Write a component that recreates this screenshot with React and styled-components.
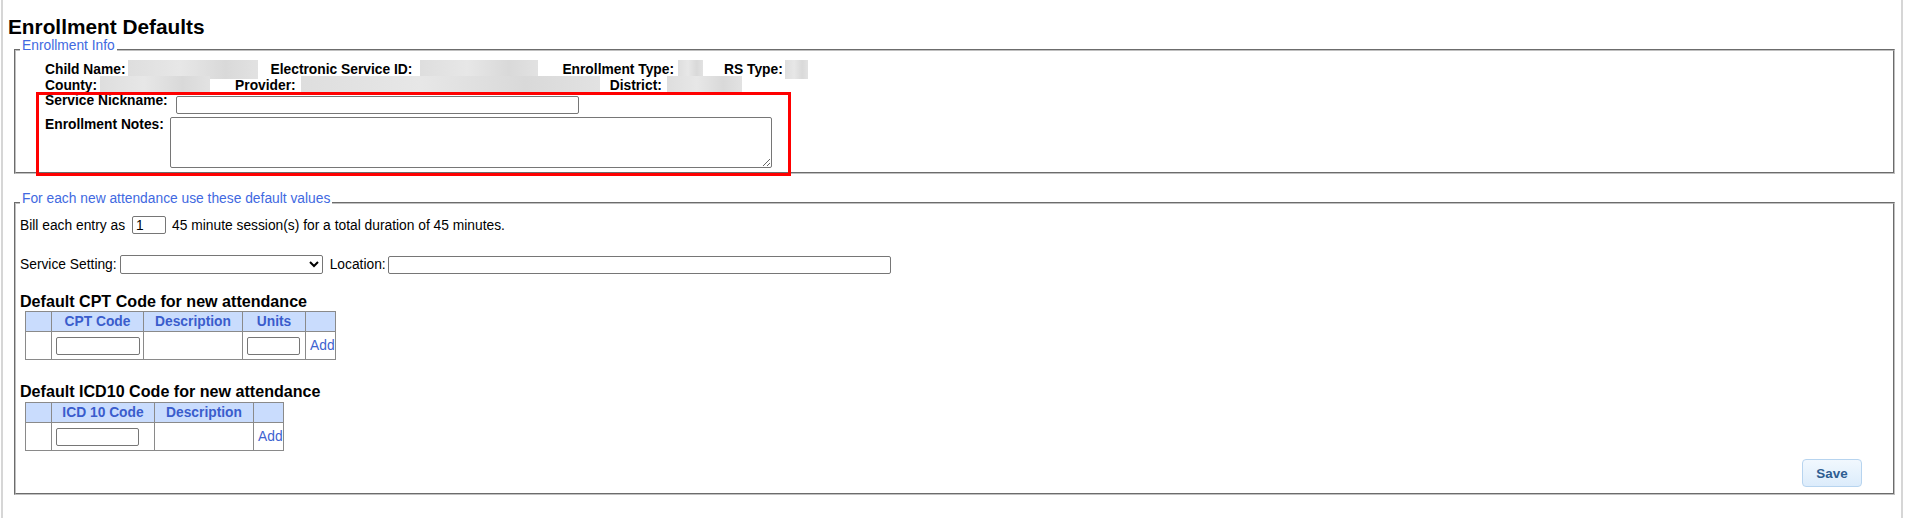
import React from "react";
import styled, { createGlobalStyle } from "styled-components";

const GlobalStyle = createGlobalStyle`
  body {
    margin: 0;
    background: #fff;
    font-family: "Liberation Sans", Arial, sans-serif;
    font-size: 13.8px;
    color: #000;
  }
`;

const Frame = styled.div`
  box-sizing: border-box;
  width: 1902px;
  min-height: 518px;
  margin-left: 1px;
  padding: 15px 6px 0 5px;
  border-left: 2px solid #d6d6d6;
  border-right: 2px solid #d6d6d6;
`;

const Title = styled.h1`
  margin: 0;
  font-size: 20.8px;
  font-weight: bold;
  line-height: 23px;
`;

const Fieldset = styled.fieldset`
  margin: ${(p) => p.$mt || 0}px 0 0 6px;
  padding: 0 4px ${(p) => p.$pb}px 4px;
  border: 2px groove #c0c0c0;
  min-width: 0;
`;

const Legend = styled.legend`
  padding: 0 2px 8px;
  color: #4169e1;
  font-size: 13.8px;
  line-height: normal;
`;

const InfoBlock = styled.div`
  padding-left: 25px;
`;

const InfoRow = styled.div`
  display: flex;
  align-items: center;
  height: 16.2px;
`;

const InfoItem = styled.div`
  display: flex;
  align-items: center;
  margin-left: ${(p) => p.$gap}px;
`;

const InfoLabel = styled.span`
  font-weight: bold;
  white-space: nowrap;
`;

const Redacted = styled.span`
  display: block;
  width: ${(p) => p.$w}px;
  height: 19px;
  margin-left: ${(p) => p.$lead}px;
  background: linear-gradient(90deg, #dedede 0%, #e7e7e7 40%, #d9d9d9 75%, #e2e2e2 100%);
  filter: blur(0.6px);
`;

const Highlight = styled.div`
  position: relative;
`;

const HighlightBox = styled.div`
  position: absolute;
  top: -1px;
  left: 16px;
  width: 755px;
  height: 84px;
  box-sizing: border-box;
  border: 3px solid #f00;
  pointer-events: none;
`;

const FieldRow = styled.div`
  display: flex;
  align-items: flex-start;
  gap: ${(p) => p.$gap}px;
  padding-left: 25px;
`;

const FieldLabel = styled.label`
  font-weight: bold;
  line-height: 15.8px;
  white-space: nowrap;
`;

const TextInput = styled.input`
  box-sizing: border-box;
  width: ${(p) => p.$w}px;
  height: 18px;
  margin: ${(p) => (p.$spaced ? "3px 0" : "0")};
  padding: 1px 3px;
  border: 1px solid #767676;
  border-radius: 2px;
  font: 13.8px "Liberation Sans", Arial, sans-serif;
  background: #fff;
`;

const NotesArea = styled.textarea`
  box-sizing: border-box;
  width: 602px;
  height: 51px;
  margin: 0;
  padding: 2px;
  border: 1px solid #767676;
  border-radius: 2px;
  font: 13.8px "Liberation Sans", Arial, sans-serif;
`;

const LineRow = styled.div`
  display: flex;
  align-items: center;
  height: ${(p) => p.$h}px;
  margin-top: ${(p) => p.$mt}px;
  white-space: nowrap;
`;

const Gap = styled.span`
  display: inline-block;
  width: ${(p) => p.$w}px;
`;

const Select = styled.select`
  box-sizing: border-box;
  width: 203px;
  height: 19px;
  margin: 0;
  padding: 0 2px;
  border: 1px solid #767676;
  border-radius: 2px;
  background: #fff;
  font: 13.8px "Liberation Sans", Arial, sans-serif;
`;

const SectionHeading = styled.div`
  margin-top: ${(p) => p.$mt}px;
  font-size: 16.1px;
  font-weight: bold;
  line-height: normal;
`;

const CodeTable = styled.table`
  border-collapse: collapse;
  table-layout: fixed;
  width: ${(p) => p.$w}px;
  margin: ${(p) => p.$mt || 0}px 0 0 5px;
`;

const Col = styled.col`
  width: ${(p) => p.$w}px;
`;

const HeadCell = styled.th`
  height: 19px;
  padding: 0;
  border: 1px solid #8a8a8a;
  background: #c9dcfd;
  color: #3a5ccc;
  font-size: 13.8px;
  font-weight: bold;
  text-align: center;
`;

const BodyCell = styled.td`
  height: 27px;
  padding: 0 4px;
  border: 1px solid #8a8a8a;
  text-align: ${(p) => (p.$center ? "center" : "left")};
`;

const CellInput = styled(TextInput)`
  display: block;
`;

const AddLink = styled.a`
  color: #3f63d0;
  text-decoration: none;
  cursor: pointer;
`;

const SaveRow = styled.div`
  display: flex;
  justify-content: flex-end;
  margin-top: 8px;
  padding-right: 27px;
`;

const SaveButton = styled.button`
  width: 60px;
  height: 28px;
  padding: 0;
  border: 1px solid #b7d4ef;
  border-radius: 4px;
  background: linear-gradient(#f1f8fe, #dcecfb);
  color: #2e5d91;
  font: bold 13.4px "Liberation Sans", Arial, sans-serif;
  cursor: pointer;
`;

const infoRows = [
  [
    { label: "Child Name:", w: 130, lead: 2, gap: 0 },
    { label: "Electronic Service ID:", w: 118, lead: 8, gap: 13 },
    { label: "Enrollment Type:", w: 25, lead: 4, gap: 24 },
    { label: "RS Type:", w: 23, lead: 2, gap: 21 },
  ],
  [
    { label: "County:", w: 110, lead: 3, gap: 0 },
    { label: "Provider:", w: 299, lead: 5, gap: 25 },
    { label: "District:", w: 75, lead: 5, gap: 10 },
  ],
];

export default function App() {
  return (
    <Frame>
      <GlobalStyle />
      <Title>Enrollment Defaults</Title>

      <Fieldset $pb={4}>
        <Legend>Enrollment Info</Legend>
        <InfoBlock>
          {infoRows.map((row, i) => (
            <InfoRow key={i}>
              {row.map((item) => (
                <InfoItem key={item.label} $gap={item.gap}>
                  <InfoLabel>{item.label}</InfoLabel>
                  <Redacted $w={item.w} $lead={item.lead} />
                </InfoItem>
              ))}
            </InfoRow>
          ))}
        </InfoBlock>
        <Highlight>
          <FieldRow $gap={8}>
            <FieldLabel>Service Nickname:</FieldLabel>
            <TextInput $w={403} $spaced />
          </FieldRow>
          <FieldRow $gap={6}>
            <FieldLabel>Enrollment Notes:</FieldLabel>
            <NotesArea />
          </FieldRow>
          <HighlightBox />
        </Highlight>
      </Fieldset>

      <Fieldset $mt={17} $pb={6}>
        <Legend>For each new attendance use these default values</Legend>
        <LineRow $h={18} $mt={2}>
          Bill each entry as
          <Gap $w={7} />
          <TextInput $w={34} defaultValue="1" />
          <Gap $w={6} />
          45 minute session(s) for a total duration of 45 minutes.
        </LineRow>
        <LineRow $h={19} $mt={21}>
          Service Setting:
          <Gap $w={3} />
          <Select defaultValue="">
            <option value=""></option>
          </Select>
          <Gap $w={7} />
          Location:
          <Gap $w={2} />
          <TextInput $w={503} />
        </LineRow>

        <SectionHeading $mt={18}>Default CPT Code for new attendance</SectionHeading>
        <CodeTable $w={310}>
          <colgroup>
            <Col $w={26} />
            <Col $w={92} />
            <Col $w={99} />
            <Col $w={63} />
            <Col $w={30} />
          </colgroup>
          <thead>
            <tr>
              <HeadCell />
              <HeadCell>CPT Code</HeadCell>
              <HeadCell>Description</HeadCell>
              <HeadCell>Units</HeadCell>
              <HeadCell />
            </tr>
          </thead>
          <tbody>
            <tr>
              <BodyCell />
              <BodyCell>
                <CellInput $w={84} />
              </BodyCell>
              <BodyCell />
              <BodyCell>
                <CellInput $w={53} />
              </BodyCell>
              <BodyCell $center>
                <AddLink>Add</AddLink>
              </BodyCell>
            </tr>
          </tbody>
        </CodeTable>

        <SectionHeading $mt={22}>Default ICD10 Code for new attendance</SectionHeading>
        <CodeTable $w={258} $mt={1}>
          <colgroup>
            <Col $w={26} />
            <Col $w={103} />
            <Col $w={99} />
            <Col $w={30} />
          </colgroup>
          <thead>
            <tr>
              <HeadCell />
              <HeadCell>ICD 10 Code</HeadCell>
              <HeadCell>Description</HeadCell>
              <HeadCell />
            </tr>
          </thead>
          <tbody>
            <tr>
              <BodyCell />
              <BodyCell>
                <CellInput $w={83} />
              </BodyCell>
              <BodyCell />
              <BodyCell $center>
                <AddLink>Add</AddLink>
              </BodyCell>
            </tr>
          </tbody>
        </CodeTable>

        <SaveRow>
          <SaveButton>Save</SaveButton>
        </SaveRow>
      </Fieldset>
    </Frame>
  );
}
